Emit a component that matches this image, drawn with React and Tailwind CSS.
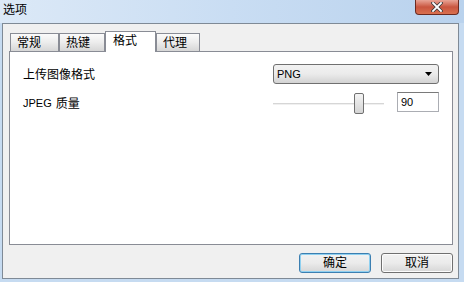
const TABS = [
  { label: '常规', w: 'w-[49px] ml-px' },
  { label: '热键', w: 'w-[46px]' },
  { label: '格式', w: 'w-[51px]', active: true },
  { label: '代理', w: 'w-[44px]' },
]

const font = { fontFamily: '"Liberation Sans", "Noto Sans CJK SC", sans-serif' }

function CloseButton() {
  return (
    <div className="w-[44px] h-[15px] rounded-b-[4px] border border-t-0 border-[#6b2a20] bg-gradient-to-b from-[#e8a496] via-[#c9553f] to-[#d9704f] flex items-center justify-center">
      <svg width="12" height="10" viewBox="0 0 12 10">
        <path d="M2 1 L10 9 M10 1 L2 9" stroke="#3c3c3c" strokeWidth="3.4" strokeLinecap="square" />
        <path d="M2 1 L10 9 M10 1 L2 9" stroke="#ffffff" strokeWidth="1.8" strokeLinecap="square" />
      </svg>
    </div>
  )
}

function Button({ children, primary }) {
  return (
    <button
      className={`w-[72px] h-[20px] rounded-[3px] border text-[12px] text-black leading-none flex items-center justify-center bg-gradient-to-b from-[#f2f2f2] via-[#ebebeb] to-[#d6d6d6] ${
        primary ? 'border-[#3c7fb1] shadow-[inset_0_0_0_1px_#8fd0f0]' : 'border-[#707070] shadow-[inset_0_0_0_1px_#fcfcfc]'
      }`}
    >
      {children}
    </button>
  )
}

export default function App() {
  return (
    <div className="w-[464px] h-[282px] bg-[#c6dbf1] flex flex-col overflow-hidden text-black" style={font}>

      {/* title bar */}
      <div className="h-[23px] flex-shrink-0 flex justify-between items-start pr-[5px] bg-gradient-to-r from-[#dce9f7] via-[#c9ddf3] to-[#b9d2ed]">
        <span className="pl-[3px] pt-[3px] text-[12px] leading-[14px]">选项</span>
        <CloseButton />
      </div>

      {/* client */}
      <div className="ml-[2px] w-[457px] h-[256px] flex-shrink-0 border border-[#7f8a96] bg-[#f0f0f0] pl-[6px] pr-[5px] pt-[7px] pb-[5px] flex flex-col">

        {/* tabs */}
        <div className="h-[20px] flex items-end">
          {TABS.map(t => (
            t.active ? (
              <div key={t.label} className={`${t.w} h-[21px] -mb-px relative z-10 bg-white border border-b-0 border-[#898c95] text-[12px] leading-none flex items-center pl-[7px] pb-[2px]`}>
                {t.label}
              </div>
            ) : (
              <div key={t.label} className={`${t.w} h-[18px] bg-gradient-to-b from-[#fbfbfb] via-[#ececec] to-[#d6d6d6] border border-b-0 border-[#898c95] text-[12px] leading-none flex items-center pl-[6px] pt-[1px]`}>
                {t.label}
              </div>
            )
          ))}
        </div>

        {/* panel */}
        <div className="w-[444px] h-[194px] bg-white border border-[#898c95] pl-[13px] pr-[13px] pt-[12px] flex flex-col gap-[8px]">
          <div className="h-[20px] flex items-center justify-between">
            <span className="text-[12px] leading-none pt-[2px]">上传图像格式</span>
            <div className="w-[166px] h-[20px] rounded-[3px] border border-[#707070] bg-gradient-to-b from-[#f2f2f2] via-[#ebebeb] to-[#d3d3d3] flex items-center justify-between pl-[3px] pr-[6px]">
              <span className="text-[11px] leading-none">PNG</span>
              <svg width="7" height="4" viewBox="0 0 7 4"><path d="M0 0 H7 L3.5 4 Z" fill="#000" /></svg>
            </div>
          </div>
          <div className="h-[23px] flex items-center justify-between">
            <span className="text-[12px] leading-none flex items-center gap-[4px]">
              <span className="text-[11px]">JPEG</span>质量
            </span>
            <div className="flex items-center gap-[13px]">
              <div className="w-[111px] h-[23px] relative flex items-center">
                <div className="w-full h-[2px] bg-[#d6d6d6] border-b border-[#f0f0f0]"></div>
                <div className="absolute left-[81px] top-[1px] w-[10px] h-[21px] rounded-[2px] border border-[#707070] bg-gradient-to-b from-[#f4f4f4] to-[#d4d4d4]"></div>
              </div>
              <div className="w-[42px] h-[20px] bg-white border border-[#abadb3] border-t-[#7a7a7a] flex items-center pl-[3px] mb-[3px]">
                <span className="text-[11px] leading-none">90</span>
              </div>
            </div>
          </div>
        </div>

        {/* buttons */}
        <div className="mt-[8px] flex justify-end gap-[10px]">
          <Button primary>确定</Button>
          <Button>取消</Button>
        </div>
      </div>
    </div>
  )
}
